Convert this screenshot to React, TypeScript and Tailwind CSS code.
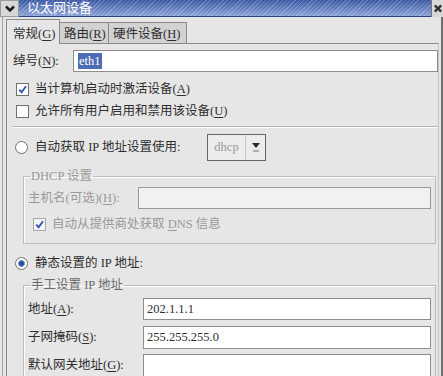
import React from "react";

function U({ children }: { children: React.ReactNode }) {
  return <span className="underline underline-offset-[2px] decoration-1">{children}</span>;
}

function CheckBox({ checked, disabled }: { checked?: boolean; disabled?: boolean }) {
  return (
    <span
      className={
        disabled
          ? "w-[13px] h-[13px] border border-[#a8a8a8] bg-[#f4f4f4] flex items-center justify-center shrink-0"
          : "w-[13px] h-[13px] border border-[#707070] bg-white flex items-center justify-center shrink-0"
      }
    >
      {checked && (
        <svg width="9" height="9" viewBox="0 0 9 9">
          <path d="M1.2 4.6 L3.6 7.2 L8 1.2" stroke="#2e58b0" strokeWidth="1.9" fill="none" />
        </svg>
      )}
    </span>
  );
}

function Radio({ checked }: { checked?: boolean }) {
  return (
    <span className="w-[13px] h-[13px] rounded-full border border-[#707070] bg-white flex items-center justify-center shrink-0">
      {checked && <span className="w-[7px] h-[7px] rounded-full bg-[#2a4f9e] border border-[#6f8fd0]" />}
    </span>
  );
}

export default function App() {
  return (
    <div className="w-[443px] h-[376px] overflow-hidden bg-[#e6e6e6] flex flex-col font-['Liberation_Serif','Noto_Sans_CJK_SC',serif] text-[12.5px] text-[#2e2e2e]">
      {/* title bar */}
      <div className="flex h-[17px] shrink-0">
        <div className="w-[19px] h-full bg-[#d8d8d8] border border-[#9a9a9a] flex items-center justify-center">
          <svg width="12" height="9" viewBox="0 0 12 9">
            <path d="M2 2.5 L6 6.5 L10 2.5" stroke="#1e1e1e" strokeWidth="2.6" fill="none" />
          </svg>
        </div>
        <div className="flex-1 h-full border-b border-[#2a4584] bg-[image:repeating-linear-gradient(135deg,rgba(255,255,255,0.2)_0px,rgba(255,255,255,0.2)_1px,transparent_1px,transparent_3px),linear-gradient(to_bottom,#3a58a2,#8ba2d8)] pl-[8px] text-white text-[13px] leading-[16px]">
          以太网设备
        </div>
        <div className="w-[12px] h-full bg-[#d8d8d8] border-l border-[#777] flex items-center justify-start pl-[1px]">
          <svg width="11" height="11" viewBox="0 0 11 11">
            <path d="M2 2 L9 9 M9 2 L2 9" stroke="#333" strokeWidth="2.6" />
          </svg>
        </div>
      </div>

      {/* body */}
      <div className="flex flex-1 min-h-0">
        <div className="w-[2px]" />
        <div className="w-px bg-[#a2a2a2]" />
        <div className="w-[3px]" />
        <div className="w-[433px] flex flex-col pt-[2px]">
          {/* tabs */}
          <div className="flex items-end h-[24px] shrink-0 relative z-10">
            <div className="w-[54px] h-[25px] -mb-px border border-b-0 border-[#8a8a8a] bg-[#e6e6e6] pl-[6px] pt-[5px] leading-[18px] whitespace-nowrap">
              常规(<U>G</U>)
            </div>
            <div className="w-[49px] h-[21px] border border-l-0 border-b-0 border-[#8a8a8a] bg-[#d2d2d2] pl-[4px] pt-[1px] leading-[20px] whitespace-nowrap">
              路由(<U>R</U>)
            </div>
            <div className="w-[78px] h-[21px] border border-l-0 border-b-0 border-[#8a8a8a] bg-[#d2d2d2] pl-[4px] pt-[1px] leading-[20px] whitespace-nowrap">
              硬件设备(<U>H</U>)
            </div>
          </div>

          {/* panel */}
          <div className="flex-1 border-t border-l border-r border-t-[#8a8a8a] border-l-[#8a8a8a] border-r-[#c4c4c4] flex flex-col pl-[6px]">
            {/* nickname */}
            <div className="flex items-center h-[22px] mt-[6px]">
              <div className="w-[60px] min-w-0 shrink-0 whitespace-nowrap">
                绰号(<U>N</U>):
              </div>
              <div className="flex-1 h-full border border-[#8e8e8e] bg-white flex items-center pl-[4px]">
                <span className="bg-[#4c6cb4] text-white leading-[16px] px-[1px]">eth1</span>
              </div>
            </div>

            <div className="flex items-center h-[20px] mt-[7px] pl-[3px] gap-[6px]">
              <CheckBox checked />
              <span>
                当计算机启动时激活设备(<U>A</U>)
              </span>
            </div>
            <div className="flex items-center h-[20px] mt-[2px] pl-[3px] gap-[6px]">
              <CheckBox />
              <span>
                允许所有用户启用和禁用该设备(<U>U</U>)
              </span>
            </div>

            {/* separator */}
            <div className="mt-[5px] h-px bg-[#b4b4b4]" />
            <div className="h-px bg-white" />

            {/* dhcp radio */}
            <div className="flex items-center h-[27px] mt-[6px] pl-[2px]">
              <Radio />
              <span className="w-[179px] shrink-0 pl-[7px] whitespace-nowrap">自动获取 IP 地址设置使用:</span>
              <div className="flex h-full w-[59px] border border-[#666] bg-[#ececec]">
                <div className="w-[38px] border-r border-[#c6c6c6] flex items-center justify-center text-[#9a9a9a]">
                  dhcp
                </div>
                <div className="flex-1 flex flex-col items-center justify-center gap-[2px]">
                  <svg width="8" height="5" viewBox="0 0 8 5">
                    <path d="M0 0 H8 L4 5 Z" fill="#2a2a2a" />
                  </svg>
                  <div className="w-[6px] h-[2px] bg-[#b0b0b0]" />
                </div>
              </div>
            </div>

            {/* DHCP frame */}
            <fieldset className="mt-[7px] ml-[10px] mr-[2px] border border-[#bcbcbc] shadow-[inset_1px_1px_0_#ffffff] pl-[4px] pr-[4px] pb-[9px]">
              <legend className="ml-[2px] px-[1px] leading-[16px] text-[#9a9a9a]">DHCP 设置</legend>
              <div className="flex items-center h-[22px] mt-[3px]">
                <div className="w-[110px] min-w-0 shrink-0 whitespace-nowrap text-[#9a9a9a]">
                  主机名(可选)(<U>H</U>):
                </div>
                <div className="flex-1 h-full border border-[#9a9a9a] bg-[#f1f1f1]" />
              </div>
              <div className="flex items-center h-[20px] mt-[5px] pl-[5px] gap-[6px] text-[#9a9a9a]">
                <CheckBox checked disabled />
                <span>
                  自动从提供商处获取 <U>D</U>NS 信息
                </span>
              </div>
            </fieldset>

            {/* static radio */}
            <div className="flex items-center h-[20px] mt-[9px] pl-[2px]">
              <Radio checked />
              <span className="pl-[7px] whitespace-nowrap">静态设置的 IP 地址:</span>
            </div>

            {/* static frame */}
            <fieldset className="mt-[4px] ml-[10px] mr-[2px] border border-[#bcbcbc] shadow-[inset_1px_1px_0_#ffffff] pl-[4px] pr-[4px]">
              <legend className="ml-[2px] px-[1px] leading-[16px] text-[#6a6a6a]">手工设置 IP 地址</legend>
              <div className="flex items-center h-[22px] mt-[5px]">
                <div className="w-[115px] min-w-0 shrink-0 whitespace-nowrap">
                  地址(<U>A</U>):
                </div>
                <div className="flex-1 h-full border border-[#8e8e8e] bg-white flex items-center pl-[3px]">202.1.1.1</div>
              </div>
              <div className="flex items-center h-[23px] mt-[6px]">
                <div className="w-[115px] min-w-0 shrink-0 whitespace-nowrap">
                  子网掩码(<U>S</U>):
                </div>
                <div className="flex-1 h-full border border-[#8e8e8e] bg-white flex items-center pl-[3px]">255.255.255.0</div>
              </div>
              <div className="flex items-center h-[23px] mt-[5px]">
                <div className="w-[115px] min-w-0 shrink-0 whitespace-nowrap">
                  默认网关地址(<U>G</U>):
                </div>
                <div className="flex-1 h-full border border-[#8e8e8e] bg-white" />
              </div>
              <div className="h-[10px]" />
            </fieldset>
          </div>
        </div>
        <div className="w-[2px]" />
        <div className="w-[2px] bg-[#6e6e6e]" />
      </div>
    </div>
  );
}
